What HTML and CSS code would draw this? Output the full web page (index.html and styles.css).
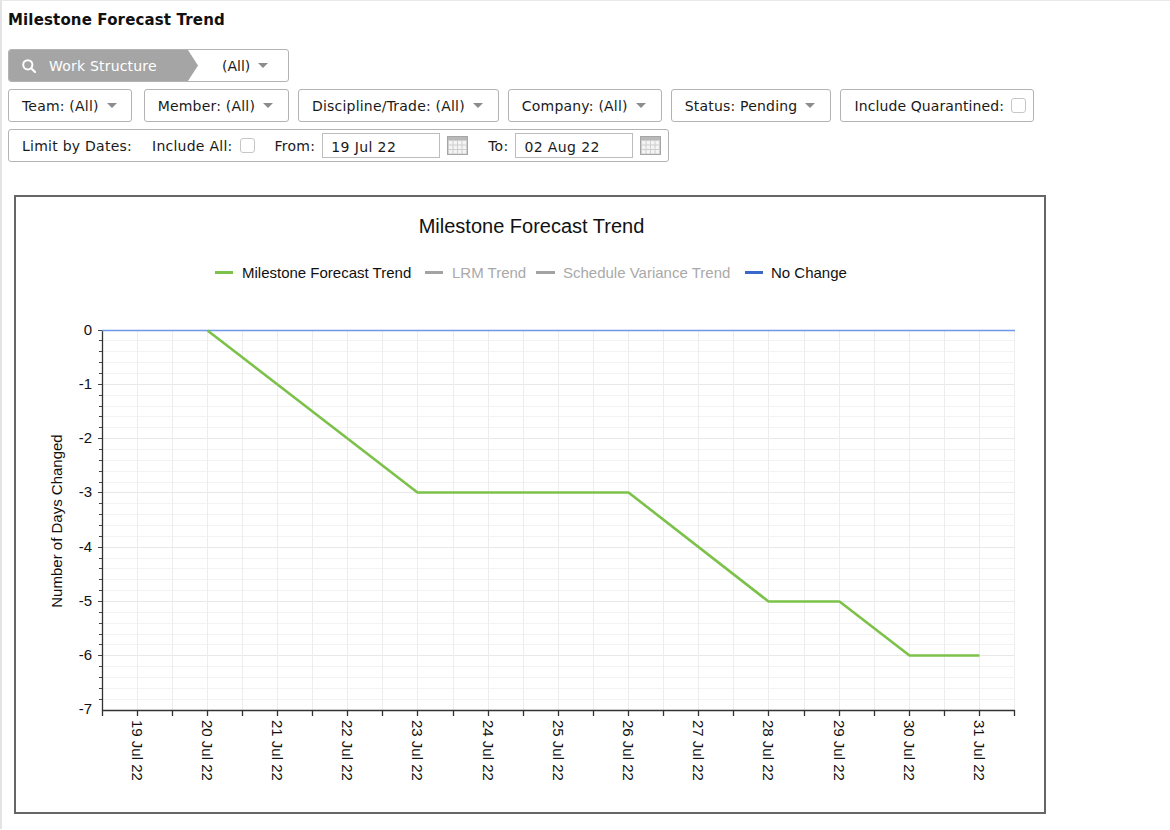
FILE: index.html
```html
<!DOCTYPE html>
<html>
<head>
<meta charset="utf-8">
<title>Milestone Forecast Trend</title>
<link rel="stylesheet" href="styles.css">
</head>
<body>
<div class="page">
  <h1 class="page-title">Milestone Forecast Trend</h1>

  <div class="toolbar-row">
    <div class="ws">
      <div class="ws-label">
        <svg class="search-icon" width="14" height="14" viewBox="0 0 14 14"><circle cx="5.8" cy="5.8" r="4.6" fill="none" stroke="#fff" stroke-width="2"/><path d="M9.2 9.2L13 13" stroke="#fff" stroke-width="2.2" stroke-linecap="round"/></svg>
        <span>Work Structure</span>
      </div>
      <div class="ws-value">(All)<span class="caret"></span></div>
    </div>
  </div>

  <div class="toolbar-row">
    <div class="btn btn-team">Team: (All)<span class="caret"></span></div>
    <div class="btn btn-member">Member: (All)<span class="caret"></span></div>
    <div class="btn">Discipline/Trade: (All)<span class="caret"></span></div>
    <div class="btn">Company: (All)<span class="caret"></span></div>
    <div class="btn">Status: Pending<span class="caret"></span></div>
    <div class="btn btn-check">Include Quarantined:<input type="checkbox" class="check"></div>
  </div>

  <div class="toolbar-row">
    <div class="dates">
      <span>Limit by Dates:</span>
      <span class="sp">Include All:</span>
      <input type="checkbox" class="check">
      <span class="sp">From:</span>
      <input type="text" class="date-input" value="19 Jul 22">
      <svg class="cal" width="21" height="19" viewBox="0 0 21 19">
        <rect x="0.5" y="0.5" width="20" height="18" fill="#cfcfcf" stroke="#a6a6a6"/>
        <rect x="1" y="1" width="19" height="3" fill="#b9b9b9"/>
        <g fill="#f4f4f4">
          <rect x="2" y="5" width="3.5" height="3.5"/><rect x="6.5" y="5" width="3.5" height="3.5"/><rect x="11" y="5" width="3.5" height="3.5"/><rect x="15.5" y="5" width="3.5" height="3.5"/>
          <rect x="2" y="9.5" width="3.5" height="3.5"/><rect x="6.5" y="9.5" width="3.5" height="3.5"/><rect x="11" y="9.5" width="3.5" height="3.5"/><rect x="15.5" y="9.5" width="3.5" height="3.5"/>
          <rect x="2" y="14" width="3.5" height="3.5"/><rect x="6.5" y="14" width="3.5" height="3.5"/><rect x="11" y="14" width="3.5" height="3.5"/><rect x="15.5" y="14" width="3.5" height="3.5"/>
        </g>
      </svg>
      <span class="sp">To:</span>
      <input type="text" class="date-input" value="02 Aug 22">
      <svg class="cal" width="21" height="19" viewBox="0 0 21 19">
        <rect x="0.5" y="0.5" width="20" height="18" fill="#cfcfcf" stroke="#a6a6a6"/>
        <rect x="1" y="1" width="19" height="3" fill="#b9b9b9"/>
        <g fill="#f4f4f4">
          <rect x="2" y="5" width="3.5" height="3.5"/><rect x="6.5" y="5" width="3.5" height="3.5"/><rect x="11" y="5" width="3.5" height="3.5"/><rect x="15.5" y="5" width="3.5" height="3.5"/>
          <rect x="2" y="9.5" width="3.5" height="3.5"/><rect x="6.5" y="9.5" width="3.5" height="3.5"/><rect x="11" y="9.5" width="3.5" height="3.5"/><rect x="15.5" y="9.5" width="3.5" height="3.5"/>
          <rect x="2" y="14" width="3.5" height="3.5"/><rect x="6.5" y="14" width="3.5" height="3.5"/><rect x="11" y="14" width="3.5" height="3.5"/><rect x="15.5" y="14" width="3.5" height="3.5"/>
        </g>
      </svg>
    </div>
  </div>

  <div class="chart-box">
    <svg class="chart" width="1028" height="615" viewBox="16 197 1028 615">
      <text class="chart-title" x="531.5" y="233" text-anchor="middle">Milestone Forecast Trend</text>

      <g class="legend">
        <rect x="215" y="271" width="18" height="3" fill="#7cc24a"/>
        <text x="242" y="277.5" class="lg-on">Milestone Forecast Trend</text>
        <rect x="425" y="271" width="18" height="3" fill="#a3a3a3"/>
        <text x="452" y="277.5" class="lg-off">LRM Trend</text>
        <rect x="536" y="271" width="19" height="3" fill="#a3a3a3"/>
        <text x="563" y="277.5" class="lg-off">Schedule Variance Trend</text>
        <rect x="745" y="271" width="18" height="3" fill="#3b68c8"/>
        <text x="771" y="277.5" class="lg-on">No Change</text>
      </g>

      <path fill="none" stroke="#f3f3f3" stroke-width="1" d="M102 340.5H1015M102 351.5H1015M102 362.5H1015M102 373.5H1015M102 395.5H1015M102 406.5H1015M102 416.5H1015M102 427.5H1015M102 449.5H1015M102 460.5H1015M102 471.5H1015M102 482.5H1015M102 503.5H1015M102 514.5H1015M102 525.5H1015M102 536.5H1015M102 558.5H1015M102 568.5H1015M102 579.5H1015M102 590.5H1015M102 612.5H1015M102 623.5H1015M102 634.5H1015M102 644.5H1015M102 666.5H1015M102 677.5H1015M102 688.5H1015M102 699.5H1015"/>
      <path fill="none" stroke="#e8e8e8" stroke-width="1" d="M102 384.5H1015M102 438.5H1015M102 492.5H1015M102 547.5H1015M102 601.5H1015M102 655.5H1015"/>
      <path fill="none" stroke="#ededed" stroke-width="1" d="M137.5 331V710M172.5 331V710M207.5 331V710M242.5 331V710M277.5 331V710M312.5 331V710M347.5 331V710M382.5 331V710M417.5 331V710M453.5 331V710M488.5 331V710M523.5 331V710M558.5 331V710M593.5 331V710M628.5 331V710M663.5 331V710M698.5 331V710M733.5 331V710M768.5 331V710M804.5 331V710M839.5 331V710M874.5 331V710M909.5 331V710M944.5 331V710M979.5 331V710M1014.5 331V710"/>

      <path fill="none" stroke="#333" stroke-width="1.3" d="M102.5 330V710.5M102 710.5H1015"/>
      <path fill="none" stroke="#444" stroke-width="1" d="M99 340.5H102M99 351.5H102M99 362.5H102M99 373.5H102M98 384.5H102M99 395.5H102M99 406.5H102M99 416.5H102M99 427.5H102M98 438.5H102M99 449.5H102M99 460.5H102M99 471.5H102M99 482.5H102M98 492.5H102M99 503.5H102M99 514.5H102M99 525.5H102M99 536.5H102M98 547.5H102M99 558.5H102M99 568.5H102M99 579.5H102M99 590.5H102M98 601.5H102M99 612.5H102M99 623.5H102M99 634.5H102M99 644.5H102M98 655.5H102M99 666.5H102M99 677.5H102M99 688.5H102M99 699.5H102M98 330.5H102"/>
      <path fill="none" stroke="#333" stroke-width="1.3" d="M102.5 710V716M137.5 710V716M172.5 710V716M207.5 710V716M242.5 710V716M277.5 710V716M312.5 710V716M347.5 710V716M382.5 710V716M417.5 710V716M453.5 710V716M488.5 710V716M523.5 710V716M558.5 710V716M593.5 710V716M628.5 710V716M663.5 710V716M698.5 710V716M733.5 710V716M768.5 710V716M804.5 710V716M839.5 710V716M874.5 710V716M909.5 710V716M944.5 710V716M979.5 710V716M1014.5 710V716"/>

      <g class="ylab" text-anchor="end">
        <text x="92" y="335">0</text>
        <text x="92" y="389">-1</text>
        <text x="92" y="443">-2</text>
        <text x="92" y="497">-3</text>
        <text x="92" y="552">-4</text>
        <text x="92" y="606">-5</text>
        <text x="92" y="660">-6</text>
        <text x="92" y="714">-7</text>
      </g>
      <text class="ytitle" transform="translate(57 521) rotate(-90)" text-anchor="middle" dy="0.35em">Number of Days Changed</text>

      <g class="xlab">
        <text transform="translate(137.5 720) rotate(90)" dy="0.35em">19 Jul 22</text>
        <text transform="translate(207.5 720) rotate(90)" dy="0.35em">20 Jul 22</text>
        <text transform="translate(277.5 720) rotate(90)" dy="0.35em">21 Jul 22</text>
        <text transform="translate(347.5 720) rotate(90)" dy="0.35em">22 Jul 22</text>
        <text transform="translate(417.5 720) rotate(90)" dy="0.35em">23 Jul 22</text>
        <text transform="translate(488.5 720) rotate(90)" dy="0.35em">24 Jul 22</text>
        <text transform="translate(558.5 720) rotate(90)" dy="0.35em">25 Jul 22</text>
        <text transform="translate(628.5 720) rotate(90)" dy="0.35em">26 Jul 22</text>
        <text transform="translate(698.5 720) rotate(90)" dy="0.35em">27 Jul 22</text>
        <text transform="translate(768.5 720) rotate(90)" dy="0.35em">28 Jul 22</text>
        <text transform="translate(839.5 720) rotate(90)" dy="0.35em">29 Jul 22</text>
        <text transform="translate(909.5 720) rotate(90)" dy="0.35em">30 Jul 22</text>
        <text transform="translate(979.5 720) rotate(90)" dy="0.35em">31 Jul 22</text>
      </g>

      <path fill="none" stroke="#6f98e8" stroke-width="1.4" d="M102 330.5H1015"/>
      <polyline fill="none" stroke="#7cc24a" stroke-width="2.6" stroke-linejoin="round" points="207.5,330.5 417.5,492.5 628.5,492.5 768.5,601.5 839.5,601.5 909.5,655.5 979.5,655.5"/>
    </svg>
  </div>
</div>
</body>
</html>
```

FILE: styles.css
```css
html, body {
  margin: 0;
  padding: 0;
  background: #fff;
}

.page {
  min-height: 829px;
  box-sizing: border-box;
  border-left: 2px solid #e3e3e3;
  border-top: 1px solid #e9e9e9;
  padding: 11px 0 0 6px;
  font-family: "DejaVu Sans", Verdana, sans-serif;
  font-size: 14px;
  color: #1a1a1a;
}

.page-title {
  margin: 0 0 20px 0;
  font-size: 15px;
  line-height: 17px;
  font-weight: bold;
  letter-spacing: 0.15px;
  color: #111;
}

.toolbar-row {
  display: flex;
  gap: 9px;
  margin-bottom: 7px;
}

.ws {
  display: flex;
  width: 281px;
  height: 33px;
  box-sizing: border-box;
  border: 1px solid #b3b3b3;
  border-radius: 3px;
  overflow: hidden;
}

.ws-label {
  width: 189px;
  flex: none;
  background: #a5a5a5;
  color: #fff;
  display: flex;
  align-items: center;
  gap: 13px;
  padding-left: 13px;
  box-sizing: border-box;
  letter-spacing: 0.2px;
  clip-path: polygon(0 0, calc(100% - 10px) 0, 100% 50%, calc(100% - 10px) 100%, 0 100%);
}

.search-icon {
  flex: none;
}

.ws-value {
  display: flex;
  align-items: center;
  padding-left: 24px;
  color: #1a1a1a;
}

.caret {
  display: inline-block;
  width: 0;
  height: 0;
  margin-left: 8px;
  border-left: 5px solid transparent;
  border-right: 5px solid transparent;
  border-top: 5px solid #8c8c8c;
}

.btn {
  height: 33px;
  box-sizing: border-box;
  border: 1px solid #b3b3b3;
  border-radius: 3px;
  display: flex;
  align-items: center;
  padding: 0 15px 0 13px;
  white-space: nowrap;
  letter-spacing: 0.2px;
}

.btn-team {
  margin-right: 3px;
  padding-right: 14px;
}

.btn-check {
  padding-right: 7px;
  letter-spacing: 0.1px;
}

.check {
  appearance: none;
  -webkit-appearance: none;
  width: 15px;
  height: 15px;
  margin: 0 0 0 7px;
  box-sizing: border-box;
  border: 1px solid #c6c6c6;
  border-radius: 3px;
  background: #fff;
  flex: none;
}

.dates {
  height: 33px;
  box-sizing: border-box;
  border: 1px solid #b3b3b3;
  border-radius: 3px;
  display: flex;
  align-items: center;
  padding: 0 7px 0 13px;
  white-space: nowrap;
  letter-spacing: 0.25px;
}

.sp {
  margin-left: 20px;
}

.date-input {
  width: 118px;
  height: 25px;
  box-sizing: border-box;
  margin-left: 7px;
  border: 1px solid #bdbdbd;
  border-radius: 0;
  padding: 2px 8px 0 8px;
  font-family: "DejaVu Sans", Verdana, sans-serif;
  font-size: 14px;
  letter-spacing: 0.4px;
  color: #1a1a1a;
  outline: none;
}

.cal {
  margin-left: 7px;
  flex: none;
}

.chart-box {
  margin: 33px 0 0 6px;
  width: 1032px;
  height: 619px;
  box-sizing: border-box;
  border: 2px solid #666;
}

.chart {
  display: block;
  font-family: "Liberation Sans", Arial, sans-serif;
}

.chart-title {
  font-size: 20px;
  fill: #111;
}

.legend text {
  font-size: 15px;
}

.lg-on {
  fill: #111;
}

.lg-off {
  fill: #a9a9a9;
}

.ylab text,
.xlab text,
.ytitle {
  font-size: 15px;
  fill: #111;
}
```
